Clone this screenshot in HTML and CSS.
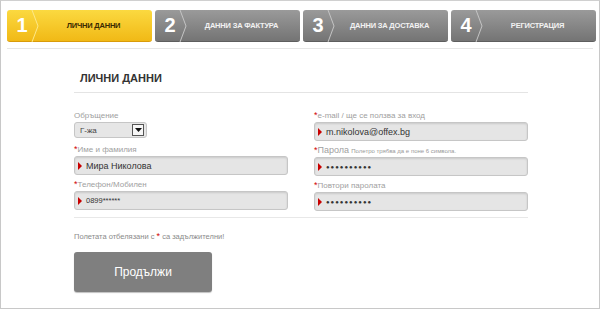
FILE: index.html
```html
<!DOCTYPE html>
<html lang="bg">
<head>
    <meta charset="UTF-8">
    <title>Регистрация</title>
    <link rel="stylesheet" href="styles.css">
</head>
<body>
    <div class="page">
        <!-- Steps -->
        <div class="steps">
            <div class="step active">
                <span class="num">1</span>
                <svg class="chev" width="8" height="32" viewBox="0 0 8 32"><polyline points="1,0 7,16 1,32" fill="none" stroke="#fce88a" stroke-width="1"/></svg>
                <span class="label">Лични данни</span>
            </div>
            <div class="step">
                <span class="num">2</span>
                <svg class="chev" width="8" height="32" viewBox="0 0 8 32"><polyline points="1,0 7,16 1,32" fill="none" stroke="#c4c4c4" stroke-width="1"/></svg>
                <span class="label">Данни за фактура</span>
            </div>
            <div class="step">
                <span class="num">3</span>
                <svg class="chev" width="8" height="32" viewBox="0 0 8 32"><polyline points="1,0 7,16 1,32" fill="none" stroke="#c4c4c4" stroke-width="1"/></svg>
                <span class="label">Данни за доставка</span>
            </div>
            <div class="step">
                <span class="num">4</span>
                <svg class="chev" width="8" height="32" viewBox="0 0 8 32"><polyline points="1,0 7,16 1,32" fill="none" stroke="#c4c4c4" stroke-width="1"/></svg>
                <span class="label">Регистрация</span>
            </div>
        </div>
        <div class="steps-rule"></div>

        <!-- Form -->
        <div class="form">
            <h2>Лични данни</h2>
            <div class="cols">
                <div class="col">
                    <div class="field first">
                        <label>Обръщение</label>
                        <div class="select">
                            <span>Г-жа</span>
                            <span class="select-btn"><svg width="7" height="4" viewBox="0 0 7 4"><polygon points="0,0 7,0 3.5,4" fill="#111"/></svg></span>
                        </div>
                    </div>
                    <div class="field">
                        <label><i>*</i>Име и фамилия</label>
                        <div class="input"><b class="mark"></b>Мира Николова</div>
                    </div>
                    <div class="field">
                        <label><i>*</i>Телефон/Мобилен</label>
                        <div class="input small"><b class="mark"></b>0899******</div>
                    </div>
                </div>
                <div class="col">
                    <div class="field">
                        <label><i>*</i>e-mail / ще се ползва за вход</label>
                        <div class="input"><b class="mark"></b>m.nikolova@offex.bg</div>
                    </div>
                    <div class="field">
                        <label><i>*</i><span class="big">Парола</span> <small>Полетро трябва да е поне 6 символа.</small></label>
                        <div class="input dots"><b class="mark"></b>●●●●●●●●●●</div>
                    </div>
                    <div class="field">
                        <label><i>*</i>Повтори паролата</label>
                        <div class="input dots"><b class="mark"></b>●●●●●●●●●●</div>
                    </div>
                </div>
            </div>
            <div class="form-rule"></div>
            <p class="note">Полетата отбелязани с <i>*</i> са задължителни!</p>
            <button class="next">Продължи</button>
        </div>
    </div>
</body>
</html>
```

FILE: styles.css
```css
body { margin: 0; font-family: 'Liberation Sans', Arial, sans-serif; background: #fff; }
.page { width: 600px; height: 309px; box-sizing: border-box; border: 1px solid #c8c8c8; border-top-color: #d0d0d0; }

/* steps */
.steps { display: flex; gap: 3px; padding: 9px 0 0 6px; }
.step { width: 145px; height: 32px; box-sizing: border-box; display: flex; align-items: center; border-radius: 3px; background: linear-gradient(#9a9a9a, #747474); border-bottom: 1px solid #5e5e5e; color: #f2f2f2; }
.step.active { background: linear-gradient(#fbd940, #f1b916); border-bottom-color: #d99b0a; color: #3a2a00; }
.step .num { width: 18px; padding-left: 6px; text-align: center; font-size: 20px; font-weight: bold; color: #fff; }
.step .chev { flex: none; }
.step .label { flex: 1; text-align: center; font-size: 7.5px; font-weight: bold; text-transform: uppercase; letter-spacing: -0.2px; padding-right: 4px; }
.steps-rule { margin: 6px 6px 0 6px; border-top: 1px solid #e6e6e6; }

/* form */
.form { padding: 0 71px 0 73px; }
.form h2 { margin: 23px 0 0; padding: 0 0 8px 6px; font-size: 11px; font-weight: bold; color: #333; text-transform: uppercase; border-bottom: 1px solid #e4e4e4; }
.cols { display: grid; grid-template-columns: 214px 214px; column-gap: 26px; padding-top: 17px; }
.field { margin-bottom: 4px; }
.field.first { margin-bottom: 6px; }
.col .field:last-child { margin-bottom: 6px; }
.field label { display: block; height: 11px; margin-bottom: 1px; font-size: 8px; color: #a0a0a0; line-height: 11px; white-space: nowrap; }
.field label i { font-style: normal; color: #d00000; font-size: 9px; }
.field label .big { font-size: 9px; }
.field label small { font-size: 6px; color: #999; }
.select { width: 73px; height: 16px; box-sizing: border-box; display: flex; align-items: center; justify-content: space-between; padding: 0 2px 0 5px; background: #e6e6e6; border: 1px solid #c6c6c6; border-radius: 3px; font-size: 8px; color: #444; }
.select-btn { width: 10px; height: 10px; display: flex; align-items: center; justify-content: center; background: #f6f6f6; border: 1px solid #555; }
.input { height: 19px; box-sizing: border-box; display: flex; align-items: center; padding-left: 3px; background: #e5e5e5; border: 1px solid #c6c6c6; border-radius: 3px; box-shadow: inset 0 1px 2px rgba(0,0,0,0.12); font-size: 9px; color: #333; }
.input.small { font-size: 7.5px; }
.input.dots { font-size: 6px; letter-spacing: 1px; color: #333; }
.mark { width: 0; height: 0; margin-right: 4px; border-left: 4px solid #c80000; border-top: 4px solid transparent; border-bottom: 4px solid transparent; }
.form-rule { border-top: 1px solid #e8e8e8; }
.note { margin: 13px 0 0; font-size: 7.5px; color: #8a8a8a; }
.note i { font-style: normal; color: #d00000; font-size: 9px; }
.next { display: block; margin-top: 11px; width: 138px; height: 40px; border: none; border-radius: 3px; background: #7f7f7f; box-shadow: 0 1px 1px rgba(0,0,0,0.25); color: #fff; font-family: 'Liberation Sans', Arial, sans-serif; font-size: 12px; }
```
